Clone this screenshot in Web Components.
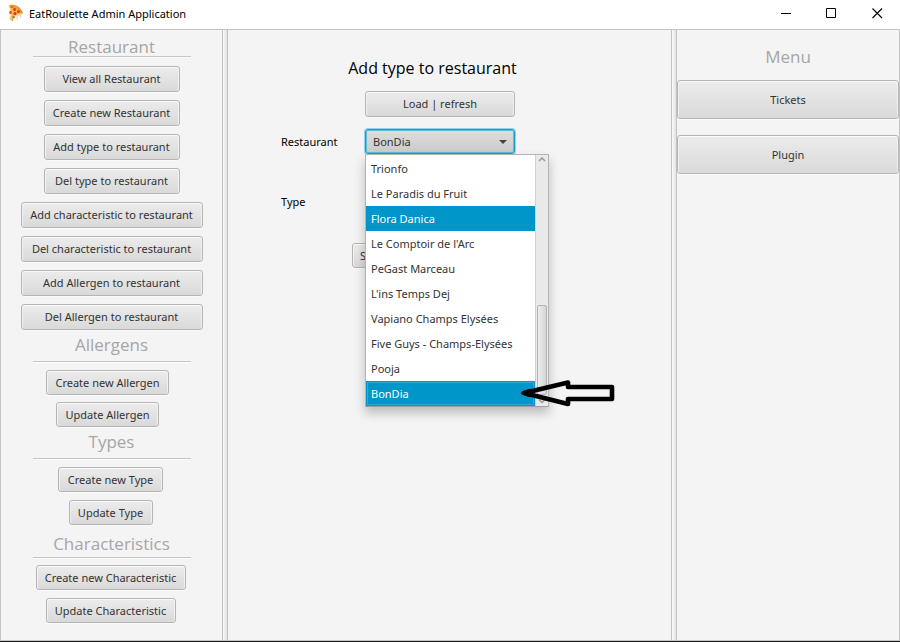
<!DOCTYPE html>
<html lang="en">
<head>
<meta charset="utf-8">
<title>EatRoulette Admin Application</title>
<style>
  html, body { margin: 0; }
  body {
    font: 11px/16px "Noto Sans", "Open Sans", sans-serif;
    color: #333;
    background: #f4f4f4;
  }
</style>
</head>
<body>
<app-window>
  <title-bar slot="title">EatRoulette Admin Application</title-bar>
  <nav slot="left" aria-label="Administration">
    <menu-section heading="Restaurant" style="--top:8px;--rule:0px;--list:8px">
      <fx-button style="--w:136px;--h:26px">View all Restaurant</fx-button>
      <fx-button style="--w:136px;--h:26px">Create new Restaurant</fx-button>
      <fx-button style="--w:136px;--h:26px">Add type to restaurant</fx-button>
      <fx-button style="--w:136px;--h:26px">Del type to restaurant</fx-button>
      <fx-button style="--w:182px;--h:26px">Add characteristic to restaurant</fx-button>
      <fx-button style="--w:182px;--h:26px">Del characteristic to restaurant</fx-button>
      <fx-button style="--w:182px;--h:26px">Add Allergen to restaurant</fx-button>
      <fx-button style="--w:182px;--h:26px">Del Allergen to restaurant</fx-button>
    </menu-section>
    <menu-section heading="Allergens" style="--top:6px;--rule:7px;--list:7px;--side:8px;--gap:7px">
      <fx-button style="--w:123px">Create new Allergen</fx-button>
      <fx-button style="--w:103px">Update Allergen</fx-button>
    </menu-section>
    <menu-section heading="Types" style="--top:6px;--rule:7px;--list:7px;--side:2px">
      <fx-button style="--w:105px">Create new Type</fx-button>
      <fx-button style="--w:84px">Update Type</fx-button>
    </menu-section>
    <menu-section heading="Characteristics" style="--top:10px;--rule:4px;--list:6px;--side:2px">
      <fx-button style="--w:150px">Create new Characteristic</fx-button>
      <fx-button style="--w:130px">Update Characteristic</fx-button>
    </menu-section>
  </nav>
  <type-form slot="main"></type-form>
  <main-menu slot="right">
    <fx-button style="--w:100%;--h:39px">Tickets</fx-button>
    <fx-button style="--w:100%;--h:39px">Plugin</fx-button>
  </main-menu>
</app-window>

<script>
const define = (name, html) => {
  const template = document.createElement('template');
  template.innerHTML = html;
  customElements.define(name, class extends HTMLElement {
    constructor() {
      super();
      this.attachShadow({ mode: 'open' }).append(template.content.cloneNode(true));
    }
    connectedCallback() {
      const title = this.shadowRoot.querySelector('[data-heading]');
      if (title) title.textContent = this.getAttribute('heading');
    }
  });
};

define('fx-button', `
<style>
  :host { display: block; width: var(--w, auto); }
  button {
    box-sizing: border-box; display: block; width: 100%; height: var(--h, 25px);
    margin: 0; padding: 0 6px; border: 1px solid #b5b5b5; border-radius: 3px;
    background: linear-gradient(#ececec, #d9d9d9);
    box-shadow: inset 0 1px #fafafa, inset 1px 0 #f1f1f1, inset -1px 0 #f1f1f1, 0 1px #fafafa;
    font: inherit; color: #333; white-space: nowrap;
  }
</style>
<button type="button"><slot></slot></button>`);

define('title-bar', `
<style>
  :host { display: flex; align-items: center; height: 29px; background: #fff; color: #000; }
  .icon { margin: 0 5px 4px 8px; }
  h1 { flex: 1; margin: 0 0 1px; font: inherit; }
  button { width: 46px; height: 29px; margin: 0; padding: 0 0 3px; border: 0; background: none; display: grid; place-items: center; }
</style>
<svg class="icon" width="16" height="18" viewBox="0 0 16 18" aria-hidden="true">
  <path d="M1.500 1 Q3 0 7 1.500 Q13 4 14.500 9 L13 11 L8 12 L3.500 16.500 L1 15 L2.500 12 Z" fill="#ffcb62"/>
  <path d="M1 2 Q3 0 7 1 Q13 3 15 9 L13 10 Q10 5 2 4 Z" fill="#f09a35"/>
  <path d="M3 3.500 Q9 4 12 9 L8 11 L3.500 12 Z" fill="#ffb84a"/>
  <circle cx="6.500" cy="5.500" r="1.500" fill="#e0332a"/><circle cx="10.500" cy="7.500" r="1.500" fill="#e0332a"/>
  <circle cx="7" cy="9.500" r="1.600" fill="#e0332a"/><circle cx="2.500" cy="8.500" r="1.400" fill="#e0442f"/>
  <circle cx="5.500" cy="13" r="1.300" fill="#a5673c"/><circle cx="4" cy="3" r="1" fill="#c95c27"/>
  <path d="M9 11 v5 M12.500 10 v4" stroke="#eadcc4" stroke-width="1.500"/>
  <path d="M4.500 12 v5" stroke="#c2a25c" stroke-width="1.500"/>
</svg>
<h1><slot></slot></h1>
<button type="button" aria-label="Minimize"><svg width="11" height="11"><path d="M1 5.500h10" stroke="#000"/></svg></button>
<button type="button" aria-label="Maximize"><svg width="11" height="11"><path d="M.5 .5h9v9h-9z" fill="none" stroke="#000"/></svg></button>
<button type="button" aria-label="Close"><svg width="11" height="11"><path d="M.5 .5l9.500 9.500M10 .5l-9.500 9.500" stroke="#000" stroke-width="1.100"/></svg></button>`);

define('app-window', `
<style>
  :host { display: flex; flex-direction: column; min-height: 100vh; box-sizing: border-box; border-bottom: 1px solid #1b1b1b; }
  .body {
    flex: 1; display: grid; grid-template-columns: 221fr 6px 443fr 6px 222fr;
    border: 1px solid #c4c4c4; background: #f4f4f4;
  }
  .divider {
    box-sizing: border-box; border: solid #c2c2c2; border-width: 0 1px;
    background: linear-gradient(90deg, #fafafa, #e2e2e2); cursor: col-resize;
  }
  .pane { min-width: 0; }
</style>
<slot name="title"></slot>
<div class="body">
  <div class="pane"><slot name="left"></slot></div>
  <div class="divider"></div>
  <main class="pane"><slot name="main"></slot></main>
  <div class="divider"></div>
  <aside class="pane"><slot name="right"></slot></aside>
</div>`);

define('menu-section', `
<style>
  :host { display: block; padding-top: var(--top); }
  h2 { margin: 0; font: 17px/18px "Open Sans", sans-serif; text-align: center; color: #a6a6a6; }
  hr { width: 158px; height: 1px; margin: var(--rule) auto 0; border: 0; background: #c4c4c4; box-shadow: 0 1px #fcfcfc; }
  .list {
    display: flex; flex-direction: column; align-items: center; gap: var(--gap, 8px);
    padding: calc(var(--list) + 1px) var(--side, 0px) 0 0;
  }
</style>
<h2 data-heading></h2>
<hr>
<div class="list"><slot></slot></div>`);

define('main-menu', `
<style>
  :host { display: flex; flex-direction: column; gap: 16px; }
  h2 { margin: 17px 0 -3px; font: 17px/20px "Open Sans", sans-serif; text-align: center; color: #a6a6a6; }
</style>
<h2>Menu</h2>
<slot></slot>`);

define('pointer-arrow', `
<style>:host { display: block; } svg { display: block; }</style>
<svg width="96" height="28" viewBox="0 0 96 28" aria-hidden="true">
  <path d="M4 14 L48 3.500 V8 H92 V20 H48 V25 Z" fill="none" stroke="#000" stroke-width="4.600" stroke-linejoin="round"/>
  <path d="M2 14 L9 11 V17 Z" stroke="#000" stroke-width="2" stroke-linejoin="round"/>
</svg>`);

define('choice-list', `
<style>
  :host {
    box-sizing: border-box; display: grid; grid-template-columns: 1fr 13px; width: 184px;
    padding-top: 1px; border: 1px solid #b4b4b4; border-bottom-color: #a0a0a0;
    background: #fff; box-shadow: 0 6px 10px rgba(0,0,0,.24);
  }
  .rows { display: flex; flex-direction: column; }
  .bar { display: flex; flex-direction: column; align-items: center; margin-top: -1px; background: #e9e9e9; border-left: 1px solid #d2d2d2; }
  .bar svg { flex: none; }
  .space { flex: 1; }
  .thumb {
    box-sizing: border-box; width: 10px; height: 90px; border: 1px solid #b4b4b4; border-radius: 2px;
    background: linear-gradient(90deg, #ececec, #d5d5d5);
  }
</style>
<div class="rows" role="listbox" aria-label="Restaurant"><slot></slot></div>
<div class="bar">
  <svg width="10" height="10"><path d="M2 6l3-3 3 3" fill="none" stroke="#999" stroke-width="1.500"/></svg>
  <div class="space"></div>
  <div class="thumb"></div>
  <svg width="10" height="11"><path d="M2 4.500l3 3 3-3" fill="none" stroke="#999" stroke-width="1.500"/></svg>
</div>`);

define('choice-item', `
<style>
  :host { box-sizing: border-box; display: block; height: 25px; padding: 0 5px; line-height: 25px; color: #333; white-space: nowrap; }
  :host([selected]) { background: #0096c9; color: #fff; }
  :host([focused]) { box-shadow: inset 0 0 0 1px #0096c9, inset 0 0 0 2px #2ba8d3; }
</style>
<slot></slot>`);

define('type-form', `
<style>
  :host { display: block; padding: 26px 34px 0 0; color: #000; }
  form { width: 303px; margin: 0 auto; }
  h2 { margin: 0 0 10px; font: 16px/25px "Open Sans", sans-serif; text-align: center; }
  .fields { display: grid; grid-template-columns: 84px 150px; align-items: center; }
  .load { grid-column: 2; margin-bottom: 12px; }
  .field { position: relative; }
  select {
    box-sizing: border-box; display: block; width: 100%; height: 25px; margin: 0; padding: 0 7px;
    appearance: none; border: 1px solid #b5b5b5; border-radius: 3px;
    background: linear-gradient(#ececec, #d9d9d9); font: inherit; color: #333;
  }
  #restaurant {
    border-color: #0f9fd0; background: linear-gradient(#dedede, #cacaca);
    box-shadow: 0 0 0 1px #93d2e9, inset 0 0 0 1px #5dbbdc;
  }
  .caret { position: absolute; right: 8px; top: 11px; pointer-events: none; }
  choice-list { position: absolute; z-index: 1; left: 0; top: 25px; }
  pointer-arrow { position: absolute; z-index: 2; left: 155px; top: 250px; }
  .second { margin-top: 35px; }
  .submit { padding: 29px 0 0 71px; }
</style>
<form>
  <h2>Add type to restaurant</h2>
  <div class="fields">
    <fx-button class="load" style="--h:26px">Load | refresh</fx-button>
    <label for="restaurant">Restaurant</label>
    <div class="field">
      <select id="restaurant"><option>BonDia</option></select>
      <svg class="caret" width="8" height="4" aria-hidden="true"><path d="M0 0h8l-4 4z" fill="#444"/></svg>
      <choice-list>
        <choice-item role="option">Trionfo</choice-item>
        <choice-item role="option">Le Paradis du Fruit</choice-item>
        <choice-item role="option" selected>Flora Danica</choice-item>
        <choice-item role="option">Le Comptoir de l'Arc</choice-item>
        <choice-item role="option">PeGast Marceau</choice-item>
        <choice-item role="option">L'ins Temps Dej</choice-item>
        <choice-item role="option">Vapiano Champs Elysées</choice-item>
        <choice-item role="option">Five Guys - Champs-Elysées</choice-item>
        <choice-item role="option">Pooja</choice-item>
        <choice-item role="option" selected focused>BonDia</choice-item>
      </choice-list>
      <pointer-arrow></pointer-arrow>
    </div>
    <label class="second" for="type">Type</label>
    <div class="field second"><select id="type"></select></div>
  </div>
  <div class="submit"><fx-button style="--w:22px">S</fx-button></div>
</form>`);
</script>
</body>
</html>
